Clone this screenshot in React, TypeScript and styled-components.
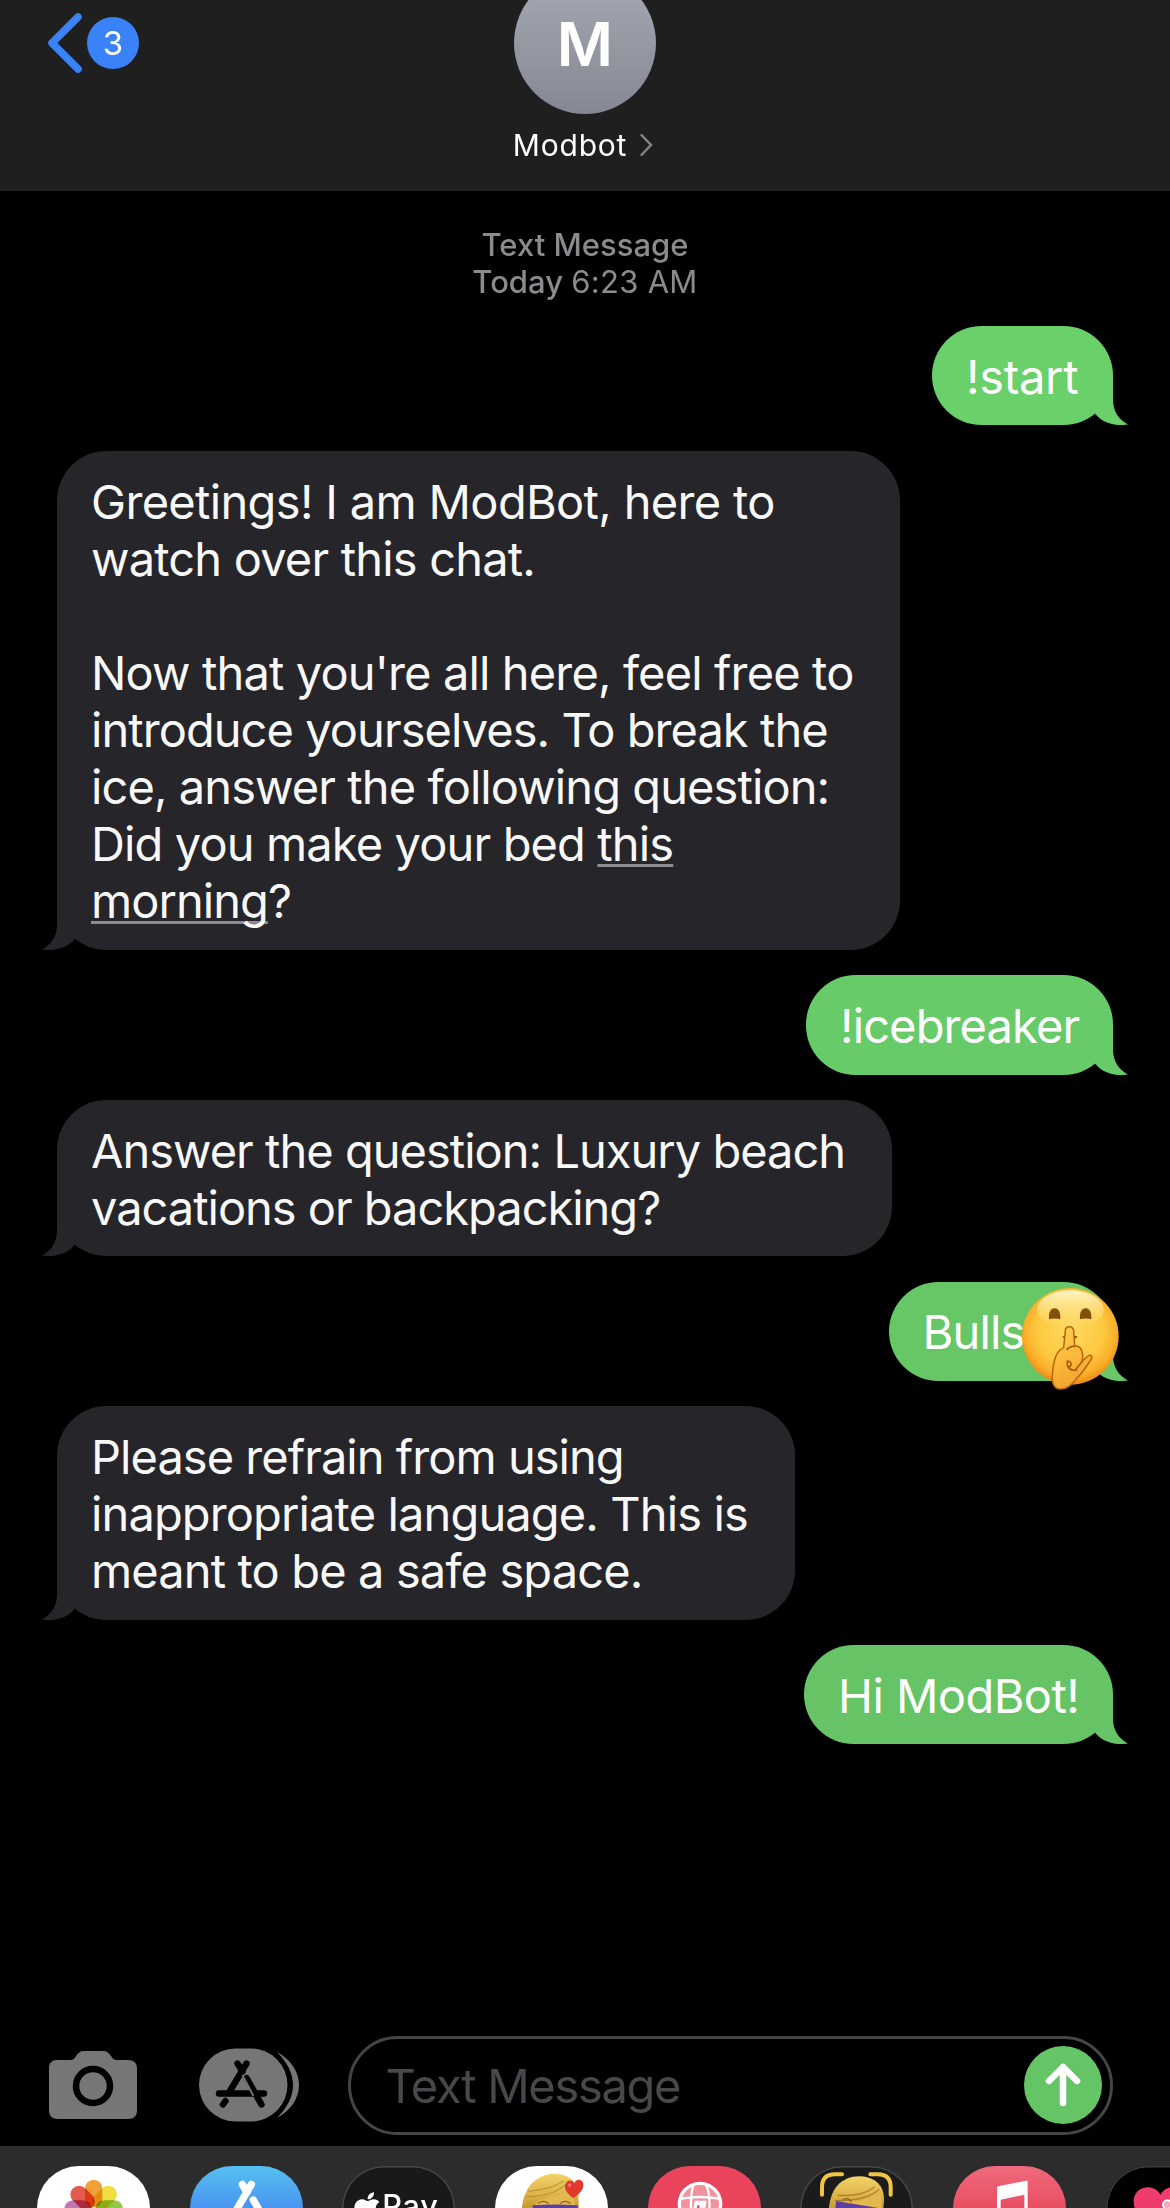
import React from "react";
import styled, { createGlobalStyle } from "styled-components";

const GlobalStyle = createGlobalStyle`
  * { box-sizing: border-box; }
  body {
    margin: 0;
    background: #000;
    color: #fff;
    font-family: Inter, "Liberation Sans", sans-serif;
  }
  svg { display: block; flex: none; }
`;

const Screen = styled.div`
  width: 1170px;
  height: 2208px;
  overflow: hidden;
  display: flex;
  flex-direction: column;
  background: #000;
`;

/* ---------- Header ---------- */

const Header = styled.header`
  flex: none;
  height: 190.5px;
  overflow: hidden;
  display: grid;
  grid-template-columns: 1fr auto 1fr;
  grid-template-rows: 189.5px;
  background: #1f1f1f;
  border-bottom: 1px solid #242424;
`;

const BackLink = styled.div`
  align-self: start;
  display: flex;
  align-items: center;
  gap: 5px;
  padding: 13px 0 0 48px;
`;

const UnreadBadge = styled.span`
  width: 52px;
  height: 52px;
  border-radius: 50%;
  background: #3a82f7;
  font-size: 33px;
  line-height: 52px;
  text-align: center;
`;

const Contact = styled.div`
  align-self: end;
  display: flex;
  flex-direction: column;
  align-items: center;
  padding-bottom: 27px;
`;

const Avatar = styled.div`
  width: 142px;
  height: 142px;
  border-radius: 50%;
  background: linear-gradient(#a6aab6, #858892);
  font-size: 61px;
  font-weight: 600;
  line-height: 145px;
  text-align: center;
`;

const ContactName = styled.div`
  display: flex;
  align-items: center;
  gap: 13px;
  margin-top: 13px;
  padding-right: 4px;
  font-size: 30px;
  line-height: 36px;
  letter-spacing: 0.8px;
`;

/* ---------- Thread ---------- */

const Thread = styled.main`
  flex: 1;
  display: flex;
  flex-direction: column;
  gap: 25.5px;
  padding: 35px 57px 0;
`;

const Timestamp = styled.div`
  font-size: 31px;
  line-height: 37px;
  text-align: center;
  font-weight: 500;
  color: #8b8a8f;
  margin-bottom: 1.3px;
`;

const Time = styled.span`
  font-weight: 400;
  letter-spacing: 0.3px;
`;

type Side = "in" | "out";

const Bubble = styled.div<{ $side: Side; $width: number; $color: string }>`
  position: relative;
  align-self: ${(p) => (p.$side === "in" ? "flex-start" : "flex-end")};
  width: ${(p) => p.$width}px;
  padding: 21.6px 0 20.4px 34px;
  border-radius: 49.5px;
  background: ${(p) => p.$color};
  color: ${(p) => (p.$side === "in" ? "#f8f8f9" : "#fff")};
`;

const Line = styled.div<{ $track: number }>`
  height: 57.14px;
  font-size: 47px;
  line-height: 57.14px;
  letter-spacing: ${(p) => p.$track}px;
  white-space: nowrap;

  u {
    text-decoration-color: #8c8b90;
    text-decoration-thickness: 3px;
    text-underline-offset: 3px;
    text-decoration-skip-ink: none;
  }
`;

const Tail = styled.svg<{ $side: Side }>`
  position: absolute;
  bottom: 0;
  width: 40px;
  height: 50px;
  ${(p) => (p.$side === "in" ? "left: -15px; transform: scaleX(-1);" : "right: -15px;")}
`;

const Sticker = styled.svg`
  position: absolute;
  left: 132px;
  top: 5px;
  width: 100px;
  height: 104px;
`;

/* ---------- Composer ---------- */

const Composer = styled.div`
  flex: none;
  height: 110px;
  display: flex;
  align-items: center;
  padding: 0 57px 11px 49px;
`;

const AppsButton = styled.div`
  margin-left: 61.5px;
`;

const Field = styled.div`
  flex: 1;
  height: 99px;
  margin-left: 48px;
  display: flex;
  align-items: center;
  justify-content: space-between;
  padding: 0 8px 0 35px;
  border: 3px solid #454548;
  border-radius: 50px;
`;

const Placeholder = styled.span`
  font-size: 47px;
  line-height: 57px;
  letter-spacing: -1.3px;
  color: #48484c;
`;

const SendButton = styled.div`
  width: 78px;
  height: 78px;
  border-radius: 50%;
  background: #65c466;
  display: flex;
  align-items: center;
  justify-content: center;
`;

/* ---------- App drawer ---------- */

const Drawer = styled.footer`
  flex: none;
  height: 62.5px;
  overflow: hidden;
  display: flex;
  gap: 39.7px;
  padding: 20.5px 0 0 37px;
  background: #2c2c2c;
`;

const Tile = styled.div<{ $bg: string; $rim?: string }>`
  flex: none;
  width: 113px;
  height: 84px;
  border-radius: 42px;
  overflow: hidden;
  background: ${(p) => p.$bg};
  box-shadow: inset 0 0 0 1.5px ${(p) => p.$rim ?? "transparent"};
`;

const Art: React.FC<{ children: React.ReactNode }> = ({ children }) => (
  <svg width="113" height="84" viewBox="0 0 339 252">
    {children}
  </svg>
);

/* ---------- Data ---------- */

interface Message {
  side: Side;
  width: number;
  color: string;
  lines: [React.ReactNode, number][];
  sticker?: boolean;
}

const GRAY = "#26252a";

const messages: Message[] = [
  { side: "out", width: 181, color: "#6ad069", lines: [["!start", -0.3]] },
  {
    side: "in",
    width: 843,
    color: GRAY,
    lines: [
      ["Greetings! I am ModBot, here to", -0.67],
      ["watch over this chat.", -0.82],
      ["", 0],
      ["Now that you're all here, feel free to", -0.86],
      ["introduce yourselves. To break the", -0.94],
      ["ice, answer the following question:", -0.91],
      [<>Did you make your bed <u>this</u></>, -0.87],
      [<><u>morning</u>?</>, -0.95],
    ],
  },
  { side: "out", width: 307, color: "#68cb69", lines: [["!icebreaker", -0.88]] },
  {
    side: "in",
    width: 835,
    color: GRAY,
    lines: [
      ["Answer the question: Luxury beach", -0.98],
      ["vacations or backpacking?", -1.02],
    ],
  },
  { side: "out", width: 224.5, color: "#67c767", lines: [["Bulls", -0.8]], sticker: true },
  {
    side: "in",
    width: 738,
    color: GRAY,
    lines: [
      ["Please refrain from using", -0.96],
      ["inappropriate language. This is", -0.87],
      ["meant to be a safe space.", -0.87],
    ],
  },
  { side: "out", width: 309, color: "#66c466", lines: [["Hi ModBot!", -0.55]] },
];

/* ---------- Drawings ---------- */

const ShushingFace = () => (
  <Sticker viewBox="483 80 300 312">
    <defs>
      <radialGradient id="skin" cx="0.5" cy="0.44" r="0.57">
        <stop offset="0" stopColor="#ffd95f" />
        <stop offset="0.6" stopColor="#fdc940" />
        <stop offset="0.84" stopColor="#faad28" />
        <stop offset="1" stopColor="#ea8414" />
      </radialGradient>
      <linearGradient id="shine" x1="0" y1="0" x2="0" y2="1">
        <stop offset="0" stopColor="#fffbd8" stopOpacity="0.9" />
        <stop offset="1" stopColor="#ffe98c" stopOpacity="0" />
      </linearGradient>
      <linearGradient id="hand" x1="0" y1="0" x2="0.3" y2="1">
        <stop offset="0" stopColor="#fdd050" />
        <stop offset="0.55" stopColor="#fbbb3c" />
        <stop offset="1" stopColor="#f2a32f" />
      </linearGradient>
    </defs>
    <circle cx="631" cy="228" r="145" fill="url(#skin)" />
    <ellipse cx="631" cy="148" rx="100" ry="58" fill="url(#shine)" />
    <path d="M567 177c-2-20 5-33 17-33s19 13 17 33q-17-5-34 0z" fill="#82500c" />
    <path d="M660 177c-2-20 5-33 17-33s19 13 17 33q-17-5-34 0z" fill="#82500c" />
    <path d="M606 229q24-8 48 0-8 8-24 7-16 1-24-7z" fill="#7a4708" />
    <path
      d="M616 212c0-17 24-17 25 0l3 44c14 0 22 10 24 26 1 8 0 15-2 21l18-16c8-6 15 1 10 9-13 20-24 37-38 52-17 18-26 37-53 38-22 1-28-19-26-42 3-39 9-71 34-82z"
      fill="url(#hand)"
      stroke="#b9640a"
      strokeWidth="4.500"
      strokeLinejoin="round"
    />
    <path
      d="M644 258c-9-1-17 2-23 9M625 303c13 2 9 20-2 16M622 302c-3 22 12 31 28 27M666 304l-18 22"
      fill="none"
      stroke="#a85a08"
      strokeWidth="5"
      strokeLinecap="round"
    />
  </Sticker>
);

const Camera = () => (
  <svg width="88" height="68" viewBox="0 0 88 68">
    <path
      fill="#767676"
      d="M8 9h13c3 0 4-1 6-4 2-3 4-5 8-5h19c4 0 6 2 8 5 2 3 3 4 6 4h11c6 0 9 3 9 9v41c0 6-3 9-9 9H9c-6 0-9-3-9-9V17c0-5 3-8 8-8z"
    />
    <circle cx="44" cy="35" r="17" fill="none" stroke="#000" strokeWidth="6.500" />
  </svg>
);

const AppStoreGlyph = () => (
  <svg width="101" height="74" viewBox="0 0 101 74">
    <path fill="#767676" d="M36.500 .5H52A36.500 36.500 0 0 1 52 73.500H36.500A36.500 36.500 0 0 1 36.500 .5z" />
    <path fill="#767676" d="M78 4C91 11 100 23 100 37S91 63 78 70C88 60 94 49 94 37S88 14 78 4z" />
    <g stroke="#000" strokeWidth="6.400" strokeLinecap="round" fill="none">
      <path d="M47.500 15.500 30 44.500M38.500 15.500l5 8" />
      <path d="M20 45.500h45" />
      <path d="M26.500 53 24 56.500" />
      <path d="M47.500 30 62.500 56.500" />
    </g>
    <path d="M43.300 27 54.500 48" stroke="#767676" strokeWidth="1.800" />
  </svg>
);

const petals = ["#f2a13a", "#f0dd3f", "#93c84c", "#54b58d", "#4f9fd0", "#7f78c0", "#bf77b6", "#e55a4f"];

const Petal = styled.rect`
  mix-blend-mode: multiply;
`;

const Photos = () => (
  <Art>
    {petals.map((color, i) => (
      <Petal
        key={color}
        x="144"
        y="41"
        width="52"
        height="82"
        rx="26"
        fill={color}
        transform={`rotate(${i * 45} 170 129)`}
      />
    ))}
  </Art>
);

const AppStore = () => (
  <Art>
    <g stroke="#fff" strokeWidth="22" strokeLinecap="round" fill="none">
      <path d="M184 55 134 141M157 55l14 24M190 102l26 45" />
    </g>
  </Art>
);

const ApplePay = () => (
  <Art>
    <path
      fill="#fff"
      d="M96 79c1 11-8 21-19 21-1-11 8-20 19-21zM77 105c6 0 10-5 19-5 6 0 12 3 16 8-16 10-13 32 3 38-5 14-12 22-19 22s-9-4-17-4-11 4-17 4c-12 0-25-24-25-41 0-16 10-27 23-27 8 0 12 5 17 5z"
    />
    <text x="121" y="152" fontFamily="Inter, sans-serif" fontSize="92" fontWeight="500" letterSpacing="2" fill="#fff">
      Pay
    </text>
  </Art>
);

const HairGradient: React.FC<{ id: string }> = ({ id }) => (
  <defs>
    <linearGradient id={id} x1="0" y1="0" x2="0" y2="1">
      <stop offset="0" stopColor="#f3d469" />
      <stop offset="0.5" stopColor="#dcb347" />
      <stop offset="1" stopColor="#b98a2a" />
    </linearGradient>
  </defs>
);

const Memoji = () => (
  <Art>
    <HairGradient id="hairA" />
    <path d="M79 150c2-38 6-62 22-86 18-27 48-41 76-41 40 0 68 20 73 56l2 71z" fill="url(#hairA)" />
    <path d="M120 150c-3-24 0-38 15-48 30-8 66-14 92-27 12 18 14 40 12 75z" fill="#e3b850" />
    <path d="M94 92c50 0 94-12 126-43M100 76c40-4 76-10 106-31" fill="none" stroke="#a87b22" strokeWidth="3.500" opacity="0.6" />
    <path d="M130 112q14-12 30 0M196 112q14-12 30 0" fill="none" stroke="#8d6422" strokeWidth="3.500" strokeLinecap="round" />
    <path d="M112 118q70-5 136 0v35H118z" fill="#5c3fa4" />
    <path d="M236 97c-12-8-25-19-26-33-1-20 20-28 28-12 6-17 28-12 27 6-1 17-16 28-29 39z" fill="#e3392f" />
    <circle cx="224" cy="57" r="5" fill="#f58077" />
  </Art>
);

const Globe = () => (
  <Art>
    <circle cx="156" cy="114" r="62" fill="#f2929f" stroke="#fff" strokeWidth="10" />
    <g fill="none" stroke="#fff" strokeWidth="7">
      <path d="M137 54c-10 30-10 60-6 100M173 54c10 20 14 50 10 90M98 98q58-10 116 0" />
    </g>
    <path d="M140 104h36l-9 50h-35z" fill="#fff" />
    <path d="m148 118 7 0-6 34h-8z" fill="#ea445c" />
  </Art>
);

const MemojiFrame = () => (
  <Art>
    <HairGradient id="hairB" />
    <path d="M85 150c2-42 8-68 26-90 18-20 42-29 66-29 40 0 66 20 73 50 4 20 1 46-4 69z" fill="url(#hairB)" />
    <path d="M118 150c-2-22 4-36 16-46 40 4 76-4 104-26 8 22 8 46 4 72z" fill="#e3b850" />
    <path d="M104 104c50 0 100-4 134-34M112 88c40 2 80 0 112-26" fill="none" stroke="#9b701f" strokeWidth="4" opacity="0.7" />
    <path d="M128 102q16-10 26 6" fill="none" stroke="#8d6422" strokeWidth="3.500" strokeLinecap="round" />
    <path d="m108 105 134 22v30H104z" fill="#5c3fa4" />
    <path d="M66 86V64Q66 25 105 25h21M211 25h22q39 0 39 39v22" fill="none" stroke="#f2c443" strokeWidth="12" strokeLinecap="round" />
  </Art>
);

const Music = () => (
  <Art>
    <path fill="#fff" d="M132 66q0-4 4-5l84-17q4-1 4 3v140h-10V86l-71 15v90h-11z" />
  </Art>
);

const Heart = () => (
  <Art>
    <path d="M163 205C112 172 82 140 83 104c1-42 58-56 80-18 22-38 79-24 80 18 1 36-29 68-80 101z" fill="#ee3d6c" />
    <circle cx="184" cy="116" r="13" fill="#f7a9bd" stroke="#fff" strokeWidth="6" />
  </Art>
);

/* ---------- App ---------- */

const App: React.FC = () => (
  <>
    <GlobalStyle />
    <Screen>
      <Header>
        <BackLink>
          <svg width="34" height="60" viewBox="0 0 34 60">
            <path d="M30 4 4 30l26 26" fill="none" stroke="#3a82f7" strokeWidth="7.500" strokeLinecap="round" strokeLinejoin="round" />
          </svg>
          <UnreadBadge>3</UnreadBadge>
        </BackLink>
        <Contact>
          <Avatar>M</Avatar>
          <ContactName>
            Modbot
            <svg width="13" height="22" viewBox="0 0 13 22">
              <path d="M1.500 1 11 11 1.500 21" fill="none" stroke="#85858b" strokeWidth="2.400" strokeLinecap="round" />
            </svg>
          </ContactName>
        </Contact>
      </Header>

      <Thread>
        <Timestamp>
          Text Message
          <br />
          Today <Time>6:23 AM</Time>
        </Timestamp>
        {messages.map((m, i) => (
          <Bubble key={i} $side={m.side} $width={m.width} $color={m.color}>
            <Tail $side={m.side} viewBox="0 0 40 50">
              <path d="M0 0H25V25C25 36 31 45 40 49.500 27 51.500 14 48 7 38.500z" fill={m.color} />
            </Tail>
            {m.lines.map(([text, track], j) => (
              <Line key={j} $track={track}>
                {text}
              </Line>
            ))}
            {m.sticker && <ShushingFace />}
          </Bubble>
        ))}
      </Thread>

      <Composer>
        <Camera />
        <AppsButton>
          <AppStoreGlyph />
        </AppsButton>
        <Field>
          <Placeholder>Text Message</Placeholder>
          <SendButton>
            <svg width="36" height="44" viewBox="0 0 36 44">
              <path d="M18 4v36M4 18 18 4l14 14" fill="none" stroke="#fff" strokeWidth="6.500" strokeLinecap="round" strokeLinejoin="round" />
            </svg>
          </SendButton>
        </Field>
      </Composer>

      <Drawer>
        <Tile $bg="#fff"><Photos /></Tile>
        <Tile $bg="linear-gradient(#55c0f0, #4a94f0 50%, #3f72ee)"><AppStore /></Tile>
        <Tile $bg="#1a1918" $rim="#484848"><ApplePay /></Tile>
        <Tile $bg="#fff"><Memoji /></Tile>
        <Tile $bg="#ea445c"><Globe /></Tile>
        <Tile $bg="#1b1b1c" $rim="#484848"><MemojiFrame /></Tile>
        <Tile $bg="linear-gradient(#ef6a7d, #e8485d 60%)"><Music /></Tile>
        <Tile $bg="#000" $rim="#3c3c3c"><Heart /></Tile>
      </Drawer>
    </Screen>
  </>
);

export default App;
